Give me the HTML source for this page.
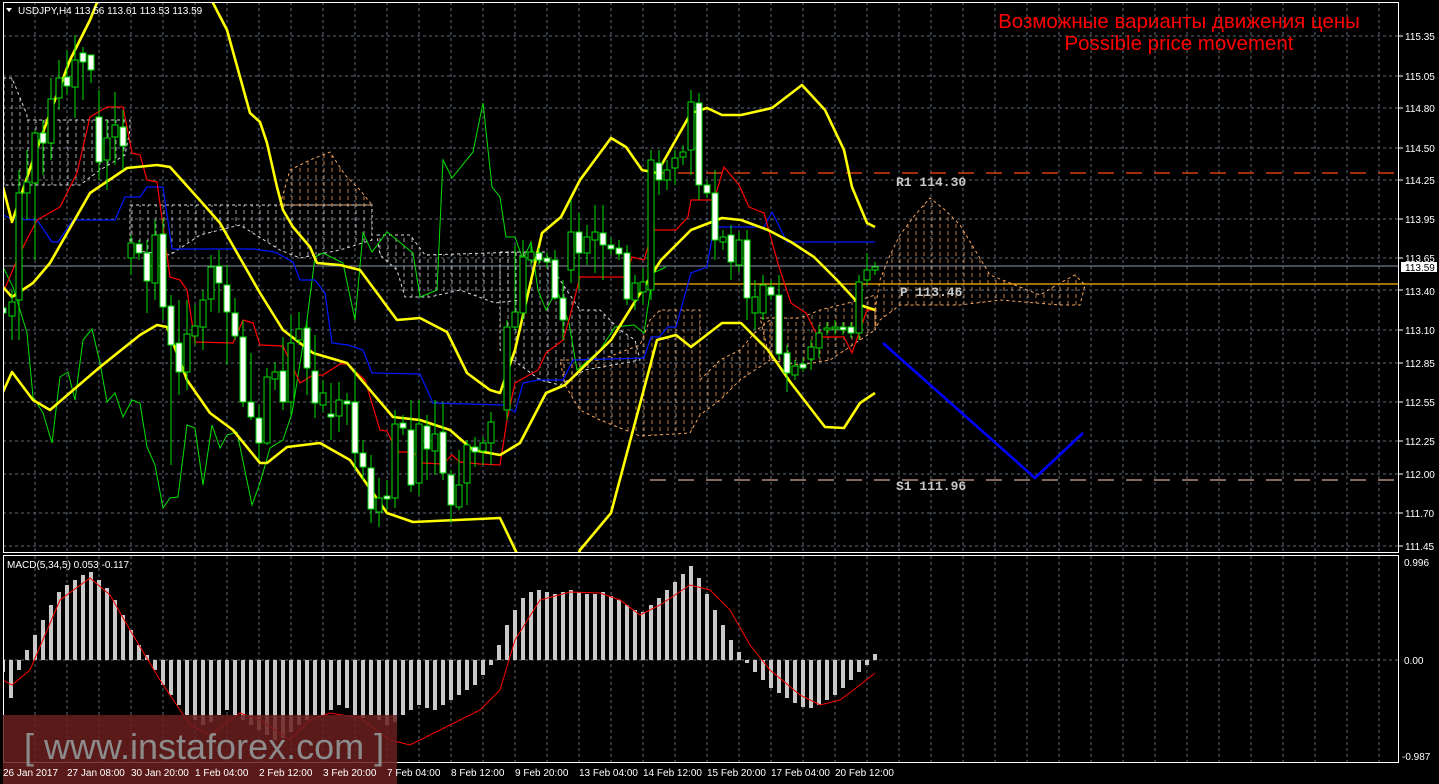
<!DOCTYPE html>
<html><head><meta charset="utf-8"><style>
html,body{margin:0;padding:0;background:#000;width:1439px;height:784px;overflow:hidden}
svg{display:block}
text{font-family:"Liberation Sans",sans-serif}
</style></head><body>
<svg width="1439" height="784" viewBox="0 0 1439 784" xmlns="http://www.w3.org/2000/svg">
<defs>
<clipPath id="cm"><rect x="3" y="2" width="1396" height="550"/></clipPath>
<clipPath id="cd"><rect x="3" y="556" width="1396" height="207"/></clipPath>
<pattern id="pw" width="8" height="7" patternUnits="userSpaceOnUse"><line x1="4" y1="0" x2="4" y2="4" stroke="#d8d8d8" stroke-width="1" stroke-opacity="0.75"/></pattern>
<pattern id="po" width="8" height="7" patternUnits="userSpaceOnUse"><line x1="4" y1="0" x2="4" y2="4" stroke="#f4a460" stroke-width="1" stroke-opacity="0.75"/></pattern>
</defs>
<rect width="1439" height="784" fill="#000"/>
<g stroke="#5f6b78" stroke-dasharray="3,3" stroke-width="1">
<path d="M3 36H1399M3 76H1399M3 108H1399M3 148H1399M3 180H1399M3 219H1399M3 258H1399M3 290H1399M3 330H1399M3 363H1399M3 402H1399M3 441H1399M3 474H1399M3 513H1399M3 546H1399M3 660H1399"/>
<path d="M35 2V552M67 2V552M99 2V552M131 2V552M163 2V552M195 2V552M227 2V552M259 2V552M291 2V552M323 2V552M355 2V552M387 2V552M419 2V552M451 2V552M483 2V552M515 2V552M547 2V552M579 2V552M611 2V552M643 2V552M675 2V552M707 2V552M739 2V552M771 2V552M803 2V552M835 2V552M867 2V552M899 2V552M931 2V552M963 2V552M995 2V552M1027 2V552M1059 2V552M1091 2V552M1123 2V552M1155 2V552M1187 2V552M1219 2V552M1251 2V552M1283 2V552M1315 2V552M1347 2V552M1379 2V552"/>
<path d="M35 556V763M67 556V763M99 556V763M131 556V763M163 556V763M195 556V763M227 556V763M259 556V763M291 556V763M323 556V763M355 556V763M387 556V763M419 556V763M451 556V763M483 556V763M515 556V763M547 556V763M579 556V763M611 556V763M643 556V763M675 556V763M707 556V763M739 556V763M771 556V763M803 556V763M835 556V763M867 556V763M899 556V763M931 556V763M963 556V763M995 556V763M1027 556V763M1059 556V763M1091 556V763M1123 556V763M1155 556V763M1187 556V763M1219 556V763M1251 556V763M1283 556V763M1315 556V763M1347 556V763M1379 556V763"/>
</g>
<g clip-path="url(#cm)">
<g stroke-dasharray="3,3" stroke-width="1">
<polygon fill="url(#pw)" stroke="#ddd" points="3,78 12,78 27,115 27,120 130,120 130,130 125,155 100,170 80,185 3,185"/>
<polygon fill="url(#pw)" stroke="#ddd" points="130,205 372,205 372,240 340,250 300,258 280,250 240,225 200,235 170,255 130,250"/>
<polygon fill="url(#po)" stroke="#f4a460" points="280,205 290,170 310,160 330,152 345,175 360,190 372,205"/>
<polygon fill="url(#pw)" stroke="#ddd" points="377,235 410,235 425,255 520,252 520,300 495,303 460,290 430,297 405,297 397,270 380,255"/>
<polygon fill="url(#pw)" stroke="#ddd" points="500,252 545,252 560,280 580,310 600,310 620,330 635,340 640,360 585,370 560,385 540,380 500,350"/>
<polygon fill="url(#po)" stroke="#f4a460" points="560,360 600,360 640,345 650,320 660,310 700,310 700,380 720,360 740,350 757,330 770,320 770,360 740,380 720,400 700,415 690,433 640,436 600,420 580,410 565,385"/>
<polygon fill="url(#po)" stroke="#f4a460" points="760,318 800,318 820,310 860,300 875,295 875,330 860,340 830,360 800,365 770,360"/>
<polygon fill="url(#po)" stroke="#f4a460" points="875,310 880,280 890,255 900,235 915,215 930,198 945,210 960,225 975,250 990,275 1010,283 1040,295 1060,283 1075,275 1085,285 1080,305 1060,305 1000,300 960,305 900,305 880,320 875,330"/>
</g>
<line x1="3" y1="266" x2="1399" y2="266" stroke="#8a96a4" stroke-width="1"/>
<line x1="650" y1="284" x2="1399" y2="284" stroke="#ffb400" stroke-width="1.3"/>
<line x1="650" y1="173" x2="1399" y2="173" stroke="#ff4a10" stroke-width="1.2" stroke-dasharray="16,12"/>
<line x1="650" y1="480" x2="1399" y2="480" stroke="#d8a898" stroke-width="1.2" stroke-dasharray="16,12"/>
<polyline fill="none" stroke="#00e000" stroke-width="1" points="3,267 13,287 27,333 33,397 43,413 52,443 60,377 68,372 75,400 83,340 92,329 100,363 107,402 115,393 123,417 132,400 140,403 147,447 155,465 163,508 170,498 178,497 187,425 195,428 203,485 212,425 220,448 227,435 237,432 252,505 260,483 270,448 283,440 292,413 307,320 315,257 323,253 343,263 355,320 363,233 372,252 387,232 413,253 420,297 437,290 443,160 452,178 473,152 483,103 492,187 500,197 506,237 515,237 523,260 531,242 538,290 546,310 557,290 569,323 577,370 600,350 615,327 634,325 644,333 653,273 666,267"/>
<polyline fill="none" stroke="#0018ff" stroke-width="1.2" points="3,215 12,219 37,220 52,242 58,242 73,220 115,220 125,197 140,197 147,187 163,187 172,249 253,249 275,252 293,262 300,280 315,280 325,293 332,343 348,345 363,350 372,373 420,374 433,403 503,405 515,412 523,383 538,380 563,380 573,360 644,358 651,337 659,337 668,327 676,327 691,273 707,267 714,227 764,227 772,212 787,242 875,242"/>
<polyline fill="none" stroke="#ff0000" stroke-width="1.2" points="3,293 20,253 37,220 60,207 77,173 90,117 107,107 123,107 132,153 140,155 147,180 157,182 170,277 180,280 187,290 195,342 233,343 243,320 253,323 260,345 283,346 300,383 313,375 323,375 340,364 347,364 365,380 380,430 387,431 397,452 413,452 423,463 443,464 452,455 460,462 480,464 500,465 507,420 515,383 538,370 546,353 563,340 569,320 580,277 626,277 632,257 644,260 653,230 676,230 688,217 691,200 714,200 724,167 739,185 749,207 764,213 779,267 791,303 806,313 818,337 844,337 852,353 867,310 875,310"/>
<g fill="none" stroke="#ffff00" stroke-width="2.6" stroke-linejoin="round">
<polyline points="3,187 12,222 33,160 50,113 70,60 90,20 100,-5"/>
<polyline points="210,-5 213,3 227,30 250,113 260,122 267,143 277,187 283,210 293,227 310,247 317,263 340,265 360,270 397,320 420,318 447,332 467,373 490,390 500,393 515,350 542,233 561,217 580,180 611,138 626,147 642,170 657,173 691,113 707,108 722,115 741,115 772,108 802,85 825,110 844,150 852,187 867,223 875,227"/>
<polyline points="3,287 12,297 33,283 50,263 90,193 127,168 157,165 170,167 197,197 220,223 260,293 283,330 313,353 347,363 393,417 420,420 450,430 473,450 500,455 520,443 546,393 565,385 611,340 661,260 691,230 722,218 741,220 768,230 791,242 814,257 837,280 860,305 875,310"/>
<polyline points="3,392 12,372 33,400 50,410 100,367 140,335 157,325 167,327 187,380 210,413 233,430 260,463 267,463 287,447 320,443 350,460 387,513 413,522 500,518 520,560"/>
<polyline points="576,560 580,550 611,513 657,340 676,335 691,347 722,323 741,323 768,350 791,383 825,427 844,428 860,403 875,393"/>
</g>
<path fill="none" stroke="#00e000" stroke-width="1" d="M3 300V320M12 290V340M19 170V340M27 150V220M35 130V260M43 120V175M51 78V160M59 60V110M67 50V95M75 35V118M83 47V100M91 55V83M99 90V180M107 120V190M115 92V165M123 110V170M131 235V275M139 240V260M147 240V313M155 220V300M163 218V320M171 295V465M179 300V395M187 300V390M195 305V345M203 290V350M211 255V312M219 250V313M227 265V365M235 298V340M243 320V407M251 353V420M259 405V460M267 368V445M275 362V390M283 337V410M291 315V415M299 312V345M307 320V395M315 335V418M323 380V412M331 383V440M339 382V432M347 393V425M355 370V470M363 440V480M371 455V523M379 478V527M387 480V510M395 410V508M403 415V435M411 400V492M419 400V495M427 415V480M435 400V475M443 403V480M451 470V523M459 450V510M467 440V505M475 437V467M483 437V465M491 412V465M507 320V420M515 245V330M523 240V320M531 245V265M539 248V265M547 252V268M555 250V300M563 280V340M571 200V283M579 213V290M587 225V265M595 205V273M603 205V280M611 238V255M619 240V260M627 245V305M635 275V310M643 268V305M651 150V300M659 150V195M667 160V190M675 150V185M683 145V165M691 90V175M699 93V200M707 180V198M715 170V260M723 230V250M731 225V280M739 232V272M747 230V320M755 280V330M763 275V320M771 280V300M779 275V360M787 345V392M795 360V380M803 358V372M811 340V370M819 325V358M827 322V335M835 320V335M843 322V335M851 322V338M859 275V340M867 253V285M875 262V275"/>
<path fill="#fff" stroke="#00e000" stroke-width="1" d="M0 308h6v5h-6zM40 133h6v10h-6zM64 77h6v9h-6zM80 53h6v9h-6zM88 55h6v15h-6zM96 117h6v45h-6zM120 127h6v19h-6zM136 244h6v9h-6zM144 253h6v28h-6zM160 234h6v73h-6zM168 306h6v39h-6zM176 343h6v29h-6zM216 266h6v17h-6zM224 285h6v27h-6zM232 313h6v23h-6zM240 337h6v65h-6zM248 402h6v15h-6zM256 418h6v25h-6zM280 371h6v31h-6zM304 328h6v40h-6zM312 371h6v32h-6zM328 414h6v3h-6zM344 401h6v3h-6zM352 402h6v51h-6zM360 453h6v14h-6zM368 468h6v41h-6zM384 496h6v3h-6zM400 423h6v5h-6zM408 430h6v55h-6zM424 426h6v23h-6zM440 432h6v41h-6zM448 475h6v30h-6zM472 447h6v5h-6zM536 253h6v7h-6zM544 258h6v4h-6zM552 260h6v38h-6zM560 298h6v22h-6zM576 232h6v21h-6zM600 233h6v12h-6zM608 245h6v4h-6zM616 248h6v6h-6zM624 253h6v46h-6zM656 163h6v17h-6zM696 103h6v82h-6zM704 185h6v8h-6zM712 193h6v47h-6zM728 235h6v27h-6zM744 240h6v58h-6zM768 287h6v8h-6zM776 295h6v59h-6zM784 353h6v20h-6zM800 364h6v4h-6zM840 327h6v3h-6zM848 327h6v6h-6z"/>
<path fill="#000" stroke="#00e000" stroke-width="1" d="M9 302h6v14h-6zM16 193h6v107h-6zM24 182h6v11h-6zM32 133h6v50h-6zM48 99h6v44h-6zM56 78h6v20h-6zM72 60h6v27h-6zM104 138h6v22h-6zM112 125h6v12h-6zM128 243h6v15h-6zM152 235h6v48h-6zM184 334h6v38h-6zM192 326h6v10h-6zM200 300h6v27h-6zM208 267h6v32h-6zM264 377h6v66h-6zM272 372h6v7h-6zM288 343h6v59h-6zM296 329h6v11h-6zM320 393h6v12h-6zM336 400h6v16h-6zM376 498h6v14h-6zM392 424h6v74h-6zM416 424h6v59h-6zM432 434h6v17h-6zM456 485h6v22h-6zM464 445h6v38h-6zM480 443h6v8h-6zM488 422h6v21h-6zM504 327h6v83h-6zM512 312h6v15h-6zM520 257h6v56h-6zM528 252h6v8h-6zM568 232h6v38h-6zM584 237h6v16h-6zM592 232h6v8h-6zM632 283h6v17h-6zM640 282h6v10h-6zM648 160h6v130h-6zM664 170h6v10h-6zM672 158h6v10h-6zM680 152h6v5h-6zM688 102h6v48h-6zM720 237h6v5h-6zM736 240h6v25h-6zM752 297h6v16h-6zM760 285h6v28h-6zM792 366h6v9h-6zM808 347h6v12h-6zM816 333h6v15h-6zM824 328h6v2h-6zM832 327h6v2h-6zM856 282h6v51h-6zM864 270h6v10h-6zM872 267h6v3h-6z"/>
<polyline fill="none" stroke="#0000ff" stroke-width="2.6" points="883,343 1035,478 1083,433"/>
</g>
<g font-size="13" fill="#c8c8c8" font-weight="bold">
<text x="896" y="186" style="font-family:'Liberation Mono',monospace">R1 114.30</text>
<text x="900" y="296" style="font-family:'Liberation Mono',monospace">P 113.46</text>
<text x="896" y="490" style="font-family:'Liberation Mono',monospace">S1 111.96</text>
</g>
<text x="1179" y="28" font-size="20.5" fill="#ff0000" text-anchor="middle">Возможные варианты движения цены</text>
<text x="1179" y="50" font-size="20.5" fill="#ff0000" text-anchor="middle">Possible price movement</text>
<polygon points="6,8 12,8 9,12" fill="#fff"/>
<text x="18" y="14" font-size="10" fill="#fff">USDJPY,H4  113.56 113.61 113.53 113.59</text>
<g clip-path="url(#cd)">
<path fill="none" stroke="#c8c8c8" stroke-width="4" d="M3 660V672M11 660V698M19 660V670M27 660V650M35 660V635M43 660V620M51 660V605M59 660V592M67 660V585M75 660V580M83 660V575M91 660V572M99 660V580M107 660V588M115 660V600M123 660V615M131 660V630M139 660V645M147 660V655M155 660V670M163 660V685M171 660V695M179 660V705M187 660V715M195 660V720M203 660V725M211 660V722M219 660V715M227 660V710M235 660V715M243 660V720M251 660V725M259 660V730M267 660V735M275 660V740M283 660V738M291 660V732M299 660V725M307 660V720M315 660V715M323 660V715M331 660V710M339 660V705M347 660V708M355 660V715M363 660V718M371 660V715M379 660V720M387 660V725M395 660V722M403 660V715M411 660V710M419 660V705M427 660V708M435 660V710M443 660V705M451 660V700M459 660V695M467 660V690M475 660V685M483 660V675M491 660V665M499 660V645M507 660V625M515 660V610M523 660V598M531 660V592M539 660V590M547 660V592M555 660V594M563 660V592M571 660V590M579 660V592M587 660V594M595 660V594M603 660V592M611 660V596M619 660V600M627 660V605M635 660V610M643 660V612M651 660V605M659 660V598M667 660V590M675 660V582M683 660V574M691 660V566M699 660V578M707 660V594M715 660V610M723 660V625M731 660V640M739 660V652M747 660V663M755 660V672M763 660V680M771 660V688M779 660V693M787 660V698M795 660V703M803 660V707M811 660V708M819 660V705M827 660V700M835 660V695M843 660V688M851 660V680M859 660V672M867 660V665M875 660V654"/>
<polyline fill="none" stroke="#ff0000" stroke-width="1" points="3,680 12,685 30,670 60,600 90,578 110,595 130,630 160,680 190,725 210,735 240,713 260,720 290,740 310,720 330,713 360,718 390,740 410,745 440,730 480,710 500,690 515,640 540,600 570,592 600,593 620,600 640,615 660,605 690,585 710,590 730,610 750,645 770,670 800,695 820,705 840,700 860,685 875,673"/>
</g>
<text x="7" y="568" font-size="10" fill="#fff">MACD(5,34,5) 0.053 -0.117</text>
<rect x="3.5" y="2.5" width="1395" height="550" fill="none" stroke="#fff" stroke-width="1"/>
<rect x="3.5" y="555.5" width="1395" height="207" fill="none" stroke="#fff" stroke-width="1"/>
<g font-size="10" fill="#fff">
<text x="1405" y="40">115.35</text><text x="1405" y="80">115.05</text><text x="1405" y="112">114.80</text><text x="1405" y="152">114.50</text><text x="1405" y="184">114.25</text><text x="1405" y="223">113.95</text><text x="1405" y="262">113.65</text><text x="1405" y="295">113.40</text><text x="1405" y="334">113.10</text><text x="1405" y="367">112.85</text><text x="1405" y="406">112.55</text><text x="1405" y="445">112.25</text><text x="1405" y="478">112.00</text><text x="1405" y="517">111.70</text><text x="1405" y="550">111.45</text>
<text x="1404" y="566">0.996</text><text x="1404" y="664">0.00</text><text x="1402" y="760">-0.987</text>
</g>
<path stroke="#fff" d="M1399 36h4M1399 76h4M1399 108h4M1399 148h4M1399 180h4M1399 219h4M1399 258h4M1399 290h4M1399 330h4M1399 363h4M1399 402h4M1399 441h4M1399 474h4M1399 513h4M1399 546h4"/>
<rect x="1401" y="262" width="36" height="10" fill="#fff"/>
<text x="1405" y="271" font-size="10" fill="#000">113.59</text>
<rect x="3" y="715" width="394" height="69" fill="#6a1e1e" fill-opacity="0.85"/>
<text x="24" y="759" font-size="36" fill="#8c8c8c">[  www.instaforex.com  ]</text>
<g font-size="10" fill="#fff">
<text x="3" y="776">26 Jan 2017</text><text x="67" y="776">27 Jan 08:00</text><text x="131" y="776">30 Jan 20:00</text><text x="195" y="776">1 Feb 04:00</text><text x="259" y="776">2 Feb 12:00</text><text x="323" y="776">3 Feb 20:00</text><text x="387" y="776">7 Feb 04:00</text><text x="451" y="776">8 Feb 12:00</text><text x="515" y="776">9 Feb 20:00</text><text x="579" y="776">13 Feb 04:00</text><text x="643" y="776">14 Feb 12:00</text><text x="707" y="776">15 Feb 20:00</text><text x="771" y="776">17 Feb 04:00</text><text x="835" y="776">20 Feb 12:00</text>
</g>
</svg>
</body></html>
